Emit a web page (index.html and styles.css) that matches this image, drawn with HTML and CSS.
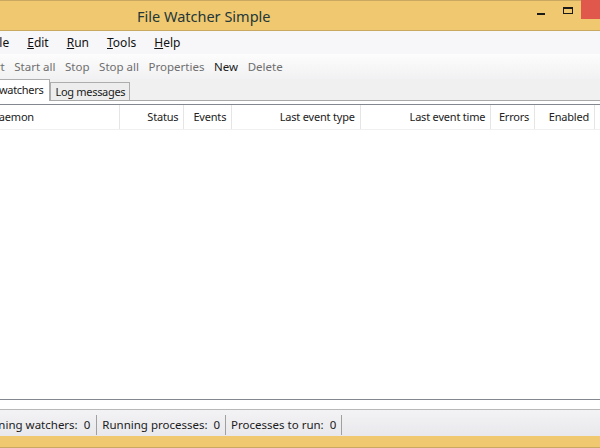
FILE: index.html
```
<!DOCTYPE html>
<html>

<head>
    <meta charset="utf-8">
    <meta name="viewport" content="width=device-width">
    <title>File Watcher Simple</title>
    <link rel="stylesheet" href="styles.css">
</head>

<body>
    <div class="win">
        <div class="titlebar">
            <span class="title">File Watcher Simple</span>
            <div class="ctrls">
                <span class="min"></span>
                <span class="max"></span>
                <span class="close"></span>
            </div>
        </div>
        <div class="menubar">
            <span class="mi">Fi<u></u>le</span>
            <span class="mi"><u>E</u>dit</span>
            <span class="mi"><u>R</u>un</span>
            <span class="mi"><u>T</u>ools</span>
            <span class="mi"><u>H</u>elp</span>
        </div>
        <div class="toolbar">
            <span class="tb off">Start</span>
            <span class="tb off">Start all</span>
            <span class="tb off">Stop</span>
            <span class="tb off">Stop all</span>
            <span class="tb off">Properties</span>
            <span class="tb">New</span>
            <span class="tb off">Delete</span>
        </div>
        <div class="tabs">
            <span class="tab on">File watchers</span>
            <span class="tab">Log messages</span>
        </div>
        <div class="panel">
            <div class="list">
                <div class="head">
                    <span class="col c1">Daemon</span>
                    <span class="col c2">Status</span>
                    <span class="col c3">Events</span>
                    <span class="col c4">Last event type</span>
                    <span class="col c5">Last event time</span>
                    <span class="col c6">Errors</span>
                    <span class="col c7">Enabled</span>
                    <span class="col rest"></span>
                </div>
            </div>
        </div>
        <div class="status">
            <span class="st">Running watchers:&nbsp; 0</span>
            <span class="st">Running processes:&nbsp; 0</span>
            <span class="st">Processes to run:&nbsp; 0</span>
        </div>
        <div class="bottom"></div>
    </div>
</body>

</html>
```

FILE: styles.css
```
html,
body {
    margin: 0;
    padding: 0;
}

body {
    width: 600px;
    height: 448px;
    overflow: hidden;
    background: #fff;
    font-family: "Noto Sans", "Open Sans", sans-serif;
    font-size: 11px;
    color: #1b1b1b;
}

.win {
    width: 630px;
    margin-left: -30px;
    height: 448px;
    display: flex;
    flex-direction: column;
}

.titlebar {
    height: 29px;
    background: #efc86f;
    border-top: 1px solid #c8a95f;
    border-bottom: 1px solid #c9a862;
    display: flex;
    align-items: flex-start;
    flex: none;
}

.title {
    margin-left: 167px;
    margin-top: 5px;
    font-size: 14.5px;
    color: #23373a;
}

.ctrls {
    margin-left: auto;
    display: flex;
    align-items: flex-start;
}

.min {
    width: 8px;
    height: 2px;
    background: #1a1a1a;
    margin-top: 12px;
}

.max {
    width: 8px;
    height: 4px;
    border: 1px solid #1a1a1a;
    border-top-width: 2px;
    margin-left: 18px;
    margin-top: 6px;
}

.close {
    width: 19px;
    height: 19px;
    margin-top: -1px;
    background: #e0584c;
    margin-left: 8px;
}

.menubar {
    height: 23px;
    background: #f7f7f9;
    display: flex;
    align-items: center;
    padding-left: 11px;
    flex: none;
    font-size: 12px;
}

.mi {
    padding: 0 9px;
    color: #111;
}

.mi u {
    text-decoration: underline;
}

.toolbar {
    height: 25px;
    background: linear-gradient(#fdfdfd, #f1f1f3);
    display: flex;
    align-items: center;
    padding-left: 4px;
    flex: none;
    font-size: 11.5px;
}

.tb {
    padding: 0 4.8px;
    color: #1b1b1b;
}

.tb.off {
    color: #6e6e6e;
}

.tabs {
    height: 21px;
    background: #f0f0f0;
    border-bottom: 1px solid #a9a9a9;
    display: flex;
    align-items: flex-end;
    padding-left: 4px;
    flex: none;
    font-size: 11px;
    letter-spacing: -0.3px;
}

.tab {
    height: 17px;
    line-height: 17px;
    padding: 0 4px;
    border: 1px solid #adadad;
    border-bottom: none;
    background: #ededed;
}

.tab.on {
    height: 21px;
    line-height: 19px;
    background: #fff;
    margin-bottom: -1px;
    position: relative;
    padding: 0 6px 0 5px;
}

.panel {
    flex: 1;
    background: #fff;
    padding: 3px 0 9px;
    display: flex;
    flex-direction: column;
}

.list {
    flex: 1;
    border-top: 1px solid #828790;
    border-bottom: 1px solid #828790;
    background: #fff;
}

.head {
    height: 24px;
    display: flex;
    border-bottom: 1px solid #f0f0f0;
}

.col {
    line-height: 24px;
    text-align: right;
    padding-right: 5px;
    border-right: 1px solid #e5e5e5;
    color: #222;
    font-size: 11px;
    letter-spacing: -0.2px;
    box-sizing: border-box;
    white-space: nowrap;
    overflow: hidden;
}

.c1 {
    width: 150px;
    text-align: left;
    padding-left: 21px;
}

.c2 {
    width: 65px;
}

.c3 {
    width: 48px;
}

.c4 {
    width: 129px;
}

.c5 {
    width: 131px;
}

.c6 {
    width: 44px;
}

.c7 {
    width: 60px;
}

.rest {
    flex: 1;
    border-right: none;
}

.status {
    height: 26px;
    background: linear-gradient(#f3f3f5, #e9e8ec);
    border-top: 1px solid #b8b8b8;
    display: flex;
    align-items: center;
    padding-top: 3px;
    box-sizing: border-box;
    height: 27px;
    flex: none;
    font-size: 11.5px;
}

.st {
    padding: 0 5px 0 5px;
    border-right: 1px solid #a0a0a0;
    line-height: 20px;
}

.st:first-child {
    padding-left: 7px;
    padding-right: 6px;
}

.bottom {
    height: 11px;
    background: #efc86f;
    border-bottom: 1px solid #c9a862;
    flex: none;
}
```
